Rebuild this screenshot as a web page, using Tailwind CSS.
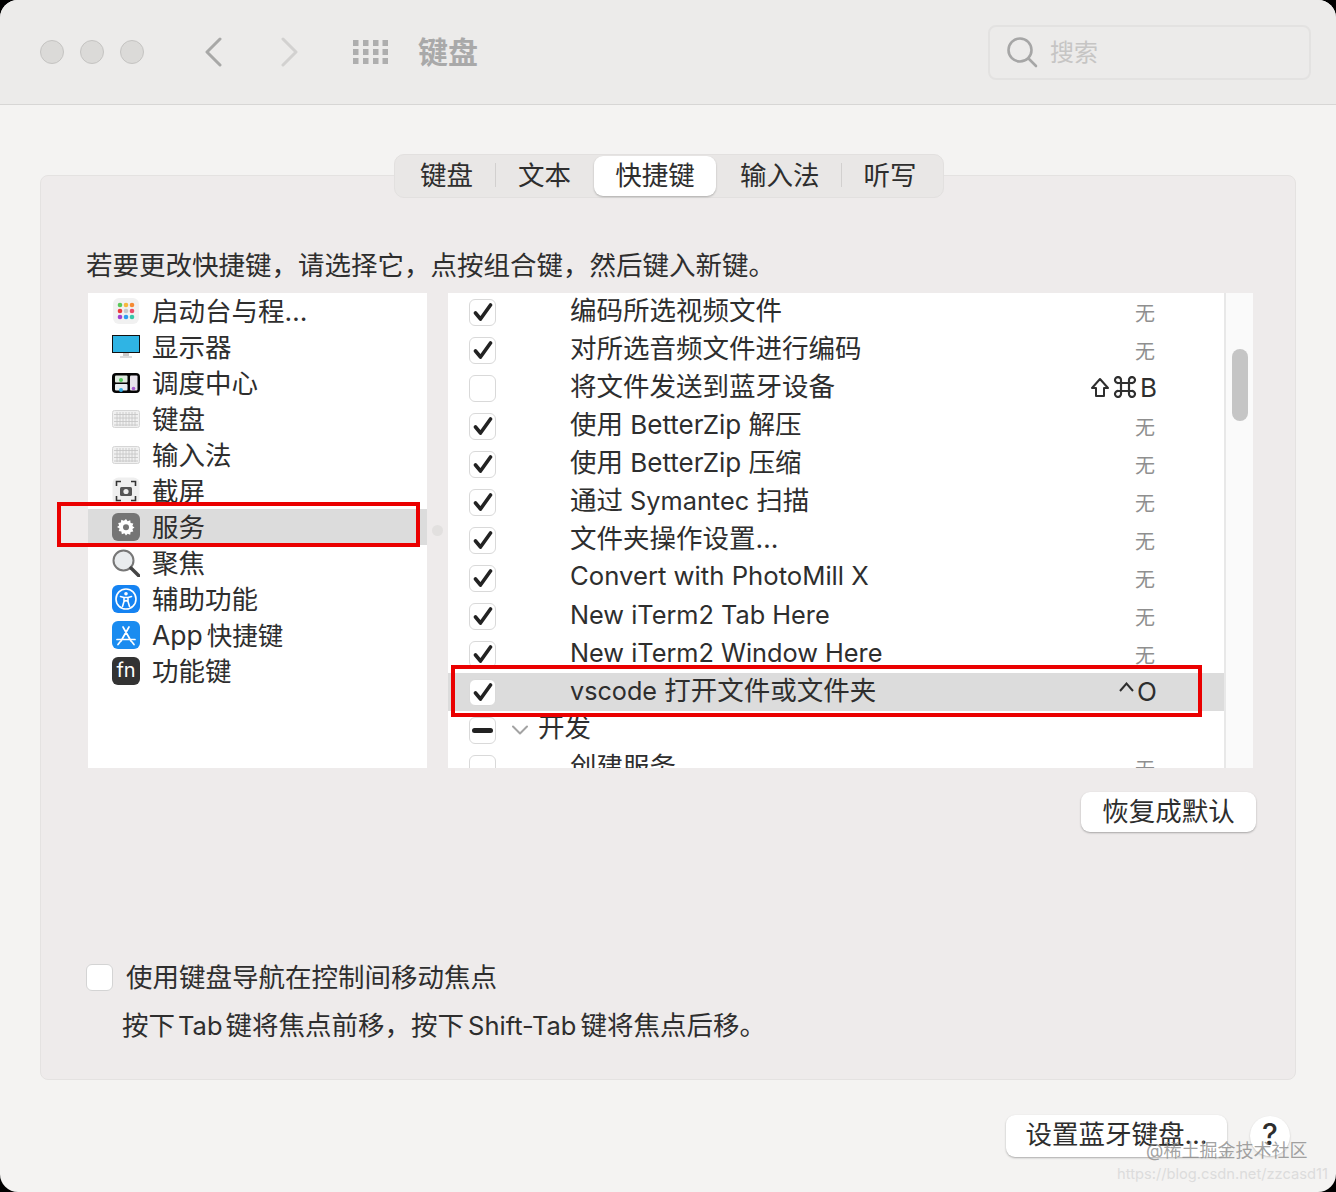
<!DOCTYPE html>
<html lang="zh-CN">
<head>
    <meta charset="UTF-8">
    <meta name="viewport" content="width=device-width, initial-scale=1.0">
    <title>键盘</title>
    <script src="https://cdn.jsdelivr.net/npm/@tailwindcss/browser@4"></script>
</head>
<body class="bg-black w-[1336px] h-[1192px] overflow-hidden font-['Inter','Noto_Sans_CJK_SC',sans-serif] text-[#2e2e2e] text-[26.5px]">
<div class="relative w-full h-full rounded-[18px] overflow-hidden bg-[#f4f3f2] flex flex-col">

    <!-- title bar -->
    <header class="h-[105px] shrink-0 flex items-center bg-[#ecebea] border-b border-[#d7d6d5]">
        <div class="flex gap-4 ml-10">
            <span class="w-6 h-6 rounded-full bg-[#dbdad8] border border-[#c5c4c2]"></span>
            <span class="w-6 h-6 rounded-full bg-[#dbdad8] border border-[#c5c4c2]"></span>
            <span class="w-6 h-6 rounded-full bg-[#dbdad8] border border-[#c5c4c2]"></span>
        </div>
        <svg class="ml-[58px]" width="22" height="30" viewBox="0 0 22 30" fill="none" stroke="#a8a8a7" stroke-width="3" stroke-linecap="round" stroke-linejoin="round"><path d="M18 2 5 15l13 13"/></svg>
        <svg class="ml-[54px]" width="22" height="30" viewBox="0 0 22 30" fill="none" stroke="#d2d1d0" stroke-width="3" stroke-linecap="round" stroke-linejoin="round"><path d="M5 2l13 13L5 28"/></svg>
        <svg class="ml-[53px]" width="36" height="26" viewBox="0 0 36 26" fill="#aeaeae">
            <rect x="0" y="1" width="5.500" height="6"/><rect x="10" y="1" width="5.500" height="6"/><rect x="20" y="1" width="5.500" height="6"/><rect x="29.500" y="1" width="5.500" height="6"/>
            <rect x="0" y="10" width="5.500" height="6"/><rect x="10" y="10" width="5.500" height="6"/><rect x="20" y="10" width="5.500" height="6"/><rect x="29.500" y="10" width="5.500" height="6"/>
            <rect x="0" y="19" width="5.500" height="6"/><rect x="10" y="19" width="5.500" height="6"/><rect x="20" y="19" width="5.500" height="6"/><rect x="29.500" y="19" width="5.500" height="6"/>
        </svg>
        <h1 class="ml-[29px] text-[30px] font-bold text-[#a9a9a9] leading-none">键盘</h1>
        <div class="ml-auto mr-[25px] w-[323px] h-[55px] rounded-[8px] border-2 border-[#e3e2e1] flex items-center pl-4 gap-[12px]">
            <svg width="32" height="32" viewBox="0 0 32 32" fill="none" stroke="#a6a6a6" stroke-width="2.600" stroke-linecap="round"><circle cx="14" cy="14" r="11.500"/><path d="M22.500 22.500 30 30"/></svg>
            <span class="text-[24px] text-[#c6c5c4] pt-[2px]">搜索</span>
        </div>
    </header>

    <main class="px-10 pt-[49px] flex-1 flex flex-col">
        <!-- tabs -->
        <div class="relative z-10 ml-[354px] w-[550px] h-[44px] rounded-[10px] bg-[#e9e7e6] border border-[#e2e0df] flex items-center pl-[25px] pb-[2px] leading-none">
            <span>键盘</span>
            <span class="ml-[22px] w-[1px] h-6 bg-[#d2d0cf]"></span>
            <span class="ml-[22px]">文本</span>
            <span class="ml-[23px] w-[122px] h-[40px] mt-[2px] pb-[2px] rounded-[9px] bg-white shadow-[0_1px_2px_rgba(0,0,0,0.25)] flex items-center justify-center">快捷键</span>
            <span class="ml-[24px]">输入法</span>
            <span class="ml-[21px] w-[1px] h-6 bg-[#d2d0cf]"></span>
            <span class="ml-[22px]">听写</span>
        </div>

        <!-- panel -->
        <section class="-mt-[23px] h-[905px] rounded-[8px] bg-[#eeebeb] border border-[#e4e2e1] pl-[45px] pt-[71px]">
            <p class="h-[36px] leading-[36px] whitespace-nowrap">若要更改快捷键，请选择它，点按组合键，然后键入新键。</p>

            <div class="flex mt-[10px] ml-[2px] h-[475px]">
                <!-- categories -->
                <ul class="w-[339px] h-full bg-white overflow-hidden">
                    <li class="h-[36px] flex items-center pl-[24px] gap-[12px]">
                        <svg width="28" height="28" viewBox="0 0 28 28"><rect x="1" y="1" width="26" height="26" rx="6" fill="#f1f1f1"/><circle cx="8" cy="8" r="2.300" fill="#5ac85a"/><circle cx="14" cy="8" r="2.300" fill="#f5b83d"/><circle cx="20" cy="8" r="2.300" fill="#f58a33"/><circle cx="8" cy="14" r="2.300" fill="#ec3b3b"/><circle cx="14" cy="14" r="2.300" fill="#c9c9c9"/><circle cx="20" cy="14" r="2.300" fill="#ec4a6a"/><circle cx="8" cy="20" r="2.300" fill="#a23fd0"/><circle cx="14" cy="20" r="2.300" fill="#2f9cf0"/><circle cx="20" cy="20" r="2.300" fill="#36c7a8"/></svg>
                        <span class="pt-[2px]">启动台与程…</span>
                    </li>
                    <li class="h-[36px] flex items-center pl-[24px] gap-[12px]">
                        <svg width="28" height="24" viewBox="0 0 28 24"><rect x="11" y="17" width="6" height="5" fill="#c9c9c9"/><rect x="8" y="21" width="12" height="2" fill="#dcdcdc"/><rect x="0.500" y="0.500" width="27" height="17" fill="#2fb4e4" stroke="#111"/></svg>
                        <span class="pt-[2px]">显示器</span>
                    </li>
                    <li class="h-[36px] flex items-center pl-[24px] gap-[12px]">
                        <svg width="28" height="20" viewBox="0 0 28 20"><rect width="28" height="20" rx="4" fill="#050505"/><rect x="3" y="2.500" width="12.500" height="7" rx="1" fill="#dfe9df"/><rect x="3" y="11" width="12.500" height="6.500" rx="1" fill="#e7eef1"/><rect x="18" y="2.500" width="7.500" height="15" rx="1" fill="#e8e2ea"/><circle cx="9" cy="7" r="2" fill="#52c95a"/><circle cx="9" cy="17" r="2" fill="#35aee6"/><circle cx="21.500" cy="15.500" r="1.800" fill="#a75ad0"/></svg>
                        <span class="pt-[2px]">调度中心</span>
                    </li>
                    <li class="h-[36px] flex items-center pl-[24px] gap-[12px]">
                        <svg width="28" height="18" viewBox="0 0 28 18"><rect x="0.500" y="0.500" width="27" height="17" rx="2" fill="#f0f0f0" stroke="#d6d6d6"/><path d="M2 4.500h24M2 8h24M2 11.500h24M2 15h24M5 2v14M8 2v14M11 2v14M14 2v14M17 2v14M20 2v14M23 2v14" stroke="#c4c4c4" stroke-width="0.800"/></svg>
                        <span class="pt-[2px]">键盘</span>
                    </li>
                    <li class="h-[36px] flex items-center pl-[24px] gap-[12px]">
                        <svg width="28" height="18" viewBox="0 0 28 18"><rect x="0.500" y="0.500" width="27" height="17" rx="2" fill="#f0f0f0" stroke="#d6d6d6"/><path d="M2 4.500h24M2 8h24M2 11.500h24M2 15h24M5 2v14M8 2v14M11 2v14M14 2v14M17 2v14M20 2v14M23 2v14" stroke="#c4c4c4" stroke-width="0.800"/></svg>
                        <span class="pt-[2px]">输入法</span>
                    </li>
                    <li class="h-[36px] flex items-center pl-[24px] gap-[12px]">
                        <svg width="28" height="28" viewBox="0 0 28 28" fill="none"><rect x="0.500" y="0.500" width="27" height="27" rx="6" fill="#efefef"/><path d="M4.500 9V4.500H9M19 4.500h4.500V9M23.500 19v4.500H19M9 23.500H4.500V19" stroke="#333" stroke-width="1.600"/><rect x="8" y="10" width="12" height="9" rx="1.500" fill="#555"/><circle cx="14" cy="14.500" r="2.600" fill="#eee"/></svg>
                        <span class="pt-[2px]">截屏</span>
                    </li>
                    <li class="h-[36px] flex items-center pl-[24px] gap-[12px] bg-[#dcdcdc]">
                        <svg width="28" height="28" viewBox="0 0 28 28"><rect width="28" height="28" rx="6" fill="#757575"/><path d="M14 6l1.600 2.200 2.600-.9.400 2.700 2.700.4-.9 2.600 2.100 1.500-2.100 1.500.9 2.600-2.700.4-.4 2.700-2.600-.9L14 22.500l-1.600-2.200-2.600.9-.4-2.700-2.700-.4.9-2.600L5 14l2.100-1.500-.9-2.600 2.700-.4.400-2.700 2.600.9z" fill="#fff"/><circle cx="14" cy="14.200" r="3" fill="#757575"/></svg>
                        <span class="pt-[2px]">服务</span>
                    </li>
                    <li class="h-[36px] flex items-center pl-[24px] gap-[12px]">
                        <svg width="28" height="28" viewBox="0 0 28 28" fill="none"><circle cx="11.500" cy="11.500" r="10" fill="#e9ecee" stroke="#777" stroke-width="2"/><path d="M19 19l8 8" stroke="#444" stroke-width="3.400" stroke-linecap="round"/></svg>
                        <span class="pt-[2px]">聚焦</span>
                    </li>
                    <li class="h-[36px] flex items-center pl-[24px] gap-[12px]">
                        <svg width="28" height="28" viewBox="0 0 28 28" fill="none"><rect width="28" height="28" rx="6" fill="#1583f2"/><circle cx="14" cy="14" r="10" stroke="#fff" stroke-width="1.600"/><circle cx="14" cy="8.700" r="1.800" fill="#fff"/><path d="M8.500 11.500 12 12.500v4l-1.500 5M19.500 11.500 16 12.500v4l1.500 5M12 12.500h4M12 16.500l2-1 2 1" stroke="#fff" stroke-width="1.600" stroke-linecap="round" stroke-linejoin="round"/></svg>
                        <span class="pt-[2px]">辅助功能</span>
                    </li>
                    <li class="h-[36px] flex items-center pl-[24px] gap-[12px]">
                        <svg width="28" height="28" viewBox="0 0 28 28" fill="none"><rect width="28" height="28" rx="6" fill="#1a8cf0"/><path d="M11 6l8 14M17 6 9 20M5 18.500h18M20 21l2 2.500M8 21l-2 2.500" stroke="#fff" stroke-width="1.700" stroke-linecap="round"/></svg>
                        <span class="pt-[2px] flex items-baseline"><span>App</span><span class="ml-[4px] text-[25.500px]">快捷键</span></span>
                    </li>
                    <li class="h-[36px] flex items-center pl-[24px] gap-[12px]">
                        <span class="w-[28px] h-[28px] rounded-[6px] bg-[#333333] text-white text-[20px] leading-none flex items-center justify-center pb-[2px]">fn</span>
                        <span class="pt-[2px]">功能键</span>
                    </li>
                </ul>

                <span class="w-[21px] flex justify-center pt-[232px]"><i class="block w-[11px] h-[11px] rounded-full bg-[#e2e0df]"></i></span>

                <!-- services -->
                <div class="w-[776px] h-full bg-white overflow-hidden">
                    <div class="h-[38px] flex items-center pl-[21px]">
                        <span class="w-[27px] h-[27px] rounded-[6px] bg-white border border-[#d9d9d9] flex items-center justify-center"><svg width="20" height="20" viewBox="0 0 20 20" fill="none" stroke="#222" stroke-width="3.600" stroke-linecap="round" stroke-linejoin="round"><path d="M2.500 11 7.500 17 17.500 3"/></svg></span>
                        <span class="ml-[74px] pb-[3px]">编码所选视频文件</span>
                        <span class="ml-auto mr-[69px] pt-[3px] text-[20px] text-[#8f8f8f]">无</span>
                    </div>
                    <div class="h-[38px] flex items-center pl-[21px]">
                        <span class="w-[27px] h-[27px] rounded-[6px] bg-white border border-[#d9d9d9] flex items-center justify-center"><svg width="20" height="20" viewBox="0 0 20 20" fill="none" stroke="#222" stroke-width="3.600" stroke-linecap="round" stroke-linejoin="round"><path d="M2.500 11 7.500 17 17.500 3"/></svg></span>
                        <span class="ml-[74px] pb-[3px]">对所选音频文件进行编码</span>
                        <span class="ml-auto mr-[69px] pt-[3px] text-[20px] text-[#8f8f8f]">无</span>
                    </div>
                    <div class="h-[38px] flex items-center pl-[21px]">
                        <span class="w-[27px] h-[27px] rounded-[6px] bg-white border border-[#d9d9d9]"></span>
                        <span class="ml-[74px] pb-[3px]">将文件发送到蓝牙设备</span>
                        <span class="ml-auto mr-[67px] pb-[2px] flex items-center gap-[3px]"><svg width="20" height="21" viewBox="0 0 20 21" fill="none" stroke="#2e2e2e" stroke-width="2" stroke-linejoin="round"><path d="M10 2 18 11h-4v8H6v-8H2z"/></svg><svg width="24" height="22" viewBox="0 0 24 22" fill="none" stroke="#2e2e2e" stroke-width="2.200"><path d="M8 7h8v8H8zM8 7H5.500a3 3 0 1 1 2.500-3zM16 7h2.500A3 3 0 1 0 16 4zM8 15H5.500A3 3 0 1 0 8 18zM16 15h2.500A3 3 0 1 1 16 18z"/></svg><span class="text-[26px]">B</span></span>
                    </div>
                    <div class="h-[38px] flex items-center pl-[21px]">
                        <span class="w-[27px] h-[27px] rounded-[6px] bg-white border border-[#d9d9d9] flex items-center justify-center"><svg width="20" height="20" viewBox="0 0 20 20" fill="none" stroke="#222" stroke-width="3.600" stroke-linecap="round" stroke-linejoin="round"><path d="M2.500 11 7.500 17 17.500 3"/></svg></span>
                        <span class="ml-[74px] pb-[3px]">使用<span class="text-[26px]"> BetterZip </span>解压</span>
                        <span class="ml-auto mr-[69px] pt-[3px] text-[20px] text-[#8f8f8f]">无</span>
                    </div>
                    <div class="h-[38px] flex items-center pl-[21px]">
                        <span class="w-[27px] h-[27px] rounded-[6px] bg-white border border-[#d9d9d9] flex items-center justify-center"><svg width="20" height="20" viewBox="0 0 20 20" fill="none" stroke="#222" stroke-width="3.600" stroke-linecap="round" stroke-linejoin="round"><path d="M2.500 11 7.500 17 17.500 3"/></svg></span>
                        <span class="ml-[74px] pb-[3px]">使用<span class="text-[26px]"> BetterZip </span>压缩</span>
                        <span class="ml-auto mr-[69px] pt-[3px] text-[20px] text-[#8f8f8f]">无</span>
                    </div>
                    <div class="h-[38px] flex items-center pl-[21px]">
                        <span class="w-[27px] h-[27px] rounded-[6px] bg-white border border-[#d9d9d9] flex items-center justify-center"><svg width="20" height="20" viewBox="0 0 20 20" fill="none" stroke="#222" stroke-width="3.600" stroke-linecap="round" stroke-linejoin="round"><path d="M2.500 11 7.500 17 17.500 3"/></svg></span>
                        <span class="ml-[74px] pb-[3px]">通过<span class="text-[25.300px]"> Symantec </span>扫描</span>
                        <span class="ml-auto mr-[69px] pt-[3px] text-[20px] text-[#8f8f8f]">无</span>
                    </div>
                    <div class="h-[38px] flex items-center pl-[21px]">
                        <span class="w-[27px] h-[27px] rounded-[6px] bg-white border border-[#d9d9d9] flex items-center justify-center"><svg width="20" height="20" viewBox="0 0 20 20" fill="none" stroke="#222" stroke-width="3.600" stroke-linecap="round" stroke-linejoin="round"><path d="M2.500 11 7.500 17 17.500 3"/></svg></span>
                        <span class="ml-[74px] pb-[3px]">文件夹操作设置…</span>
                        <span class="ml-auto mr-[69px] pt-[3px] text-[20px] text-[#8f8f8f]">无</span>
                    </div>
                    <div class="h-[38px] flex items-center pl-[21px]">
                        <span class="w-[27px] h-[27px] rounded-[6px] bg-white border border-[#d9d9d9] flex items-center justify-center"><svg width="20" height="20" viewBox="0 0 20 20" fill="none" stroke="#222" stroke-width="3.600" stroke-linecap="round" stroke-linejoin="round"><path d="M2.500 11 7.500 17 17.500 3"/></svg></span>
                        <span class="ml-[74px] pb-[3px] text-[25.700px]">Convert with PhotoMill X</span>
                        <span class="ml-auto mr-[69px] pt-[3px] text-[20px] text-[#8f8f8f]">无</span>
                    </div>
                    <div class="h-[38px] flex items-center pl-[21px]">
                        <span class="w-[27px] h-[27px] rounded-[6px] bg-white border border-[#d9d9d9] flex items-center justify-center"><svg width="20" height="20" viewBox="0 0 20 20" fill="none" stroke="#222" stroke-width="3.600" stroke-linecap="round" stroke-linejoin="round"><path d="M2.500 11 7.500 17 17.500 3"/></svg></span>
                        <span class="ml-[74px] pb-[3px] text-[25.300px]">New iTerm2 Tab Here</span>
                        <span class="ml-auto mr-[69px] pt-[3px] text-[20px] text-[#8f8f8f]">无</span>
                    </div>
                    <div class="h-[38px] flex items-center pl-[21px]">
                        <span class="w-[27px] h-[27px] rounded-[6px] bg-white border border-[#d9d9d9] flex items-center justify-center"><svg width="20" height="20" viewBox="0 0 20 20" fill="none" stroke="#222" stroke-width="3.600" stroke-linecap="round" stroke-linejoin="round"><path d="M2.500 11 7.500 17 17.500 3"/></svg></span>
                        <span class="ml-[74px] pb-[3px] text-[25.300px]">New iTerm2 Window Here</span>
                        <span class="ml-auto mr-[69px] pt-[3px] text-[20px] text-[#8f8f8f]">无</span>
                    </div>
                    <div class="h-[38px] flex items-center pl-[21px] bg-[#dcdcdc]">
                        <span class="w-[27px] h-[27px] rounded-[6px] bg-white border border-[#d9d9d9] flex items-center justify-center"><svg width="20" height="20" viewBox="0 0 20 20" fill="none" stroke="#222" stroke-width="3.600" stroke-linecap="round" stroke-linejoin="round"><path d="M2.500 11 7.500 17 17.500 3"/></svg></span>
                        <span class="ml-[74px] pb-[3px]"><span class="text-[25.200px]">vscode </span>打开文件或文件夹</span>
                        <span class="ml-auto mr-[67px] pb-[2px] flex items-center gap-[3px]"><svg class="mb-[8px]" width="15" height="10" viewBox="0 0 15 10" fill="none" stroke="#2e2e2e" stroke-width="2"><path d="M1 9 7.500 1.500 14 9"/></svg><span class="text-[26px]">O</span></span>
                    </div>
                    <div class="h-[38px] flex items-center pl-[21px]">
                        <span class="w-[27px] h-[27px] rounded-[6px] bg-white border border-[#d9d9d9] flex items-center justify-center"><i class="block w-[21px] h-[5px] rounded-full bg-[#222]"></i></span>
                        <svg class="ml-[16px]" width="16" height="10" viewBox="0 0 16 10" fill="none" stroke="#a3a3a3" stroke-width="2" stroke-linecap="round" stroke-linejoin="round"><path d="M1 1.500 8 8.500l7-7"/></svg>
                        <span class="ml-[10px] pb-[5px]">开发</span>
                    </div>
                    <div class="h-[38px] flex items-center pl-[21px]">
                        <span class="w-[27px] h-[27px] rounded-[6px] bg-white border border-[#d9d9d9]"></span>
                        <span class="ml-[74px] pb-[3px]">创建服务</span>
                        <span class="ml-auto mr-[69px] pt-[3px] text-[20px] text-[#8f8f8f]">无</span>
                    </div>
                </div>

                <!-- scrollbar -->
                <div class="w-[29px] h-full bg-[#fafafa] border-l-2 border-[#e8e8e8] pl-[6px] pt-[56px]">
                    <div class="w-[16px] h-[72px] rounded-full bg-[#c5c5c5]"></div>
                </div>
            </div>

            <div class="flex justify-end mt-[24px] mr-[39px]">
                <button class="w-[175px] h-[40px] pb-[2px] rounded-[9px] bg-white shadow-[0_1px_2px_rgba(0,0,0,0.3)] leading-none">恢复成默认</button>
            </div>

            <div class="mt-[127px] h-[36px] flex items-center">
                <span class="w-[27px] h-[27px] rounded-[6px] bg-white border border-[#d4d4d4]"></span>
                <span class="ml-[13px] pt-[1px]">使用键盘导航在控制间移动焦点</span>
            </div>
            <p class="mt-[12px] h-[36px] leading-[36px] ml-[36px] whitespace-nowrap">按下<span class="mx-[3px] text-[25.500px]">Tab</span>键将焦点前移，按下<span class="mx-[4px] text-[25.500px]">Shift-Tab</span>键将焦点后移。</p>
        </section>

        <!-- footer buttons -->
        <div class="flex items-center justify-end mt-[35px] mr-[6px] gap-[23px]">
            <button class="w-[221px] h-[42px] pb-[3px] rounded-[9px] bg-white shadow-[0_1px_2px_rgba(0,0,0,0.3)] leading-none">设置蓝牙键盘…</button>
            <button class="w-[40px] h-[40px] rounded-full bg-white shadow-[0_1px_2px_rgba(0,0,0,0.2)] text-[30px] font-medium leading-none pb-[4px]">?</button>
        </div>
    </main>

    <!-- red annotation boxes -->
    <div class="absolute left-[57px] top-[502px] w-[363px] h-[45px] border-4 border-[#ea0000]"></div>
    <div class="absolute left-[451px] top-[665px] w-[751px] h-[52px] border-4 border-[#ea0000]"></div>

    <!-- watermarks -->
    <span class="absolute left-[1146px] top-[1139px] text-[18px] leading-[24px] text-[#8a8a8a]/80 whitespace-nowrap">@稀土掘金技术社区</span>
    <span class="absolute left-[1117px] top-[1163px] text-[14.700px] leading-[22px] text-[#dcdcdc] whitespace-nowrap">https://blog.csdn.net/zzcasd11</span>
</div>
</body>
</html>
